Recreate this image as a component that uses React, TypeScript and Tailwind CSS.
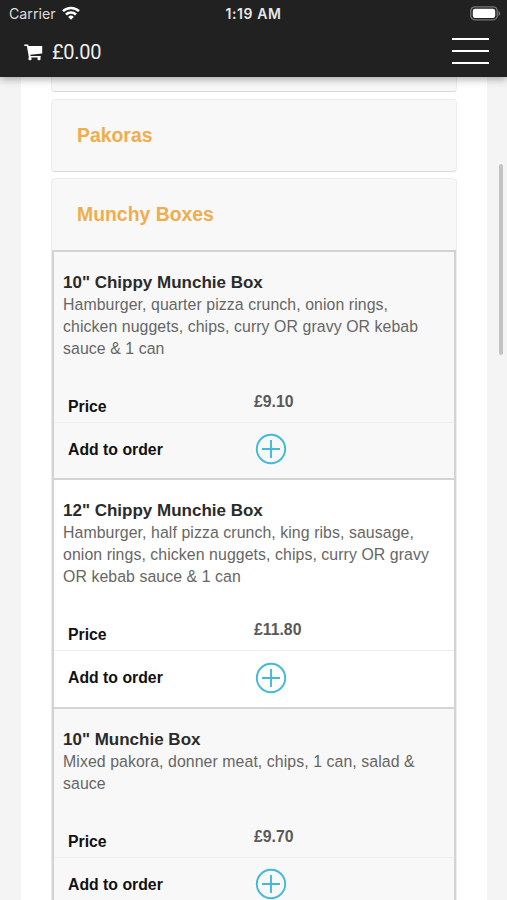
const menuItems = [
  {
    name: '10" Chippy Munchie Box',
    lines: ["Hamburger, quarter pizza crunch, onion rings,", "chicken nuggets, chips, curry OR gravy OR kebab", "sauce & 1 can"],
    price: "£9.10",
    bg: "bg-[#f8f8f8]",
  },
  {
    name: '12" Chippy Munchie Box',
    lines: ["Hamburger, half pizza crunch, king ribs, sausage,", "onion rings, chicken nuggets, chips, curry OR gravy", "OR kebab sauce & 1 can"],
    price: "£11.80",
    bg: "bg-white",
  },
  {
    name: '10" Munchie Box',
    lines: ["Mixed pakora, donner meat, chips, 1 can, salad &", "sauce"],
    price: "£9.70",
    bg: "bg-[#f8f8f8]",
  },
]

function StatusBar() {
  return (
    <div className="flex h-7 items-center justify-between pl-[9px] pr-[6px] text-white">
      <div className="flex w-[100px] items-center gap-[6px]">
        <span className="font-[Inter,sans-serif] text-[14.2px] leading-none text-[#dedede]">Carrier</span>
        <svg width="18" height="14" viewBox="0 0 18 14" className="-mt-[2px]" fill="none" stroke="#fff" strokeWidth="2.5">
          <path d="M1 5.2a11.4 11.4 0 0 1 16 0" />
          <path d="M4 8.5a7.1 7.1 0 0 1 10 0" />
          <path d="M9 13.7 6.2 10.9a4 4 0 0 1 5.6 0z" fill="#fff" stroke="none" />
        </svg>
      </div>
      <span className="font-[Inter,sans-serif] text-[14px] font-semibold leading-none tracking-[0.6px] text-[#e8e8e8]">1:19 AM</span>
      <div className="flex w-[103px] justify-end">
        <svg width="31" height="15" viewBox="0 0 31 15" className="-mt-[2px]">
          <rect x="0.8" y="0.8" width="26.4" height="13" rx="4" fill="none" stroke="#777" strokeWidth="1.3" />
          <rect x="2.8" y="2.7" width="22.4" height="9.2" rx="2.2" fill="#fff" />
          <path d="M28.5 5v4.800c1-.4 1.700-1.300 1.700-2.400S29.500 5.400 28.500 5z" fill="#777" />
        </svg>
      </div>
    </div>
  )
}

function CartIcon() {
  return (
    <svg width="19" height="17" viewBox="0 0 19 17" fill="#fff">
      <path d="M.3.500h3.800l.5 1.600H18.200v7.400L6.300 10.700l.3 1.300H16.700v1.400H4.900L2.900 2.100H.3z" />
      <rect x="4.500" y="13" width="3" height="3.200" rx="1" />
      <rect x="13.500" y="13" width="3" height="3.200" rx="1" />
    </svg>
  )
}

function Header() {
  return (
    <header className="relative z-10 h-[77px] shrink-0 bg-[#212121] shadow-[0_2px_8px_rgba(0,0,0,0.35)]">
      <StatusBar />
      <div className="flex h-[46px] items-center justify-between pl-6 pr-[18px]">
        <div className="flex items-center gap-[9px] pt-[2px] text-[#ededed]">
          <CartIcon />
          <span className="font-[Roboto,sans-serif] text-[20px] leading-none tracking-[-0.3px]">£0.00</span>
        </div>
        <button className="flex w-[37px] flex-col gap-[10px]" aria-label="Menu">
          <span className="h-[2px] w-full bg-white" />
          <span className="h-[2px] w-full bg-white" />
          <span className="h-[2px] w-full bg-white" />
        </button>
      </div>
    </header>
  )
}

function MenuItem({ item }: { item: (typeof menuItems)[number] }) {
  return (
    <div className={`shrink-0 border-x-2 border-t-2 border-[#d3d3d3] ${item.bg}`}>
      <div className="px-[9px] pt-5 text-[15.85px] leading-[22px] tracking-[0.08px] text-[#666]">
        <h3 className="text-[17px] font-bold leading-[21.9px] tracking-normal text-[#2b2b2b]">{item.name}</h3>
        {item.lines.map((line) => (
          <p key={line} className="whitespace-nowrap">{line}</p>
        ))}
      </div>
      <div className="flex h-[63px] border-b border-[#eee] pl-[14px] text-[15.8px] font-bold leading-[22px]">
        <span className="w-[186px] pt-9 text-[#111]">Price</span>
        <span className="pt-[31px] text-[#595959]">{item.price}</span>
      </div>
      <div className="flex h-[55.5px] items-center pb-[2px] pl-[14px] text-[15.8px] font-bold text-[#111]">
        <span className="w-[186.5px]">Add to order</span>
        <svg width="32" height="32" viewBox="0 0 32 32" className="-mt-[1px]" fill="none" stroke="#42b9d8" strokeWidth="1.9">
          <circle cx="16" cy="16" r="14.2" />
          <path d="M16 7v18M7 16h18" />
        </svg>
      </div>
    </div>
  )
}

export default function App() {
  return (
    <div className="relative flex h-[900px] w-[507px] flex-col overflow-hidden bg-[#f4f4f4] font-['Liberation_Sans',Arial,sans-serif]">
      <Header />
      <main className="ml-[21px] flex min-h-0 w-[466px] flex-1 flex-col overflow-hidden bg-white px-[30px]">
        <div className="h-[15px] shrink-0 rounded-b-sm border border-t-0 border-[#ececec] border-b-[#d9d9d9] bg-[#f8f8f8]" />
        <div className="mt-[7px] flex h-[73px] shrink-0 items-center rounded-sm border border-[#ececec] border-b-[#d9d9d9] bg-[#f8f8f8] pl-[25px]">
          <h2 className="text-[19.4px] font-bold text-[#f0ad4e]">Pakoras</h2>
        </div>
        <section className="mt-[6px] flex shrink-0 flex-col rounded-t-sm border border-[#ececec] bg-[#f8f8f8]">
          <div className="flex h-[71px] items-center pl-[25px]">
            <h2 className="text-[19.4px] font-bold text-[#f0ad4e]">Munchy Boxes</h2>
          </div>
          {menuItems.map((item) => (
            <MenuItem key={item.name} item={item} />
          ))}
        </section>
      </main>
      {/* Scroll indicator */}
      <div className="absolute right-[4px] top-[164px] h-[191px] w-[4px] rounded-full bg-[#c3c3c3]" />
    </div>
  )
}
